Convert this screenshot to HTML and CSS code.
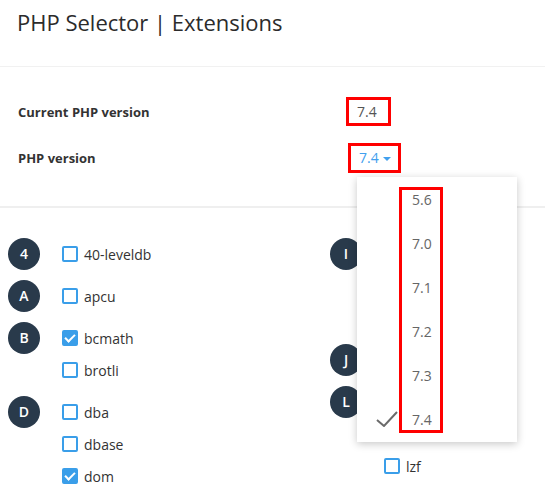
FILE: index.html
```html
<!DOCTYPE html>
<html lang="en">
<head>
  <meta charset="UTF-8">
  <title>PHP Selector | Extensions</title>
  <link rel="stylesheet" href="styles.css">
</head>
<body>
  <!-- Page title -->
  <div class="page-header">
    <h1>PHP Selector | Extensions</h1>
  </div>

  <!-- Version info -->
  <div class="version-info">
    <div class="info-label">Current PHP version</div>
    <div><span class="hl value">7.4</span></div>

    <div class="info-label">PHP version</div>
    <div class="select-wrap">
      <span class="hl trigger">7.4 <span class="caret"></span></span>

      <!-- Open version menu -->
      <ul class="menu">
        <li>5.6</li>
        <li>7.0</li>
        <li>7.1</li>
        <li>7.2</li>
        <li>7.3</li>
        <li class="selected">
          <svg class="tick" width="22" height="16" viewBox="0 0 22 16"><polyline points="1,9 8,15 21,1" fill="none" stroke="#6b6b6b" stroke-width="2"/></svg>
          7.4
        </li>
      </ul>
      <div class="menu-hl"></div>
    </div>
  </div>

  <!-- Extension list -->
  <div class="extensions">
    <div class="column">
      <div class="group">
        <span class="letter">4</span>
        <ul class="items">
          <li><span class="box"></span>40-leveldb</li>
        </ul>
      </div>
      <div class="group">
        <span class="letter">A</span>
        <ul class="items">
          <li><span class="box"></span>apcu</li>
        </ul>
      </div>
      <div class="group">
        <span class="letter">B</span>
        <ul class="items">
          <li><span class="box checked"></span>bcmath</li>
          <li><span class="box"></span>brotli</li>
        </ul>
      </div>
      <div class="group">
        <span class="letter">D</span>
        <ul class="items">
          <li><span class="box"></span>dba</li>
          <li><span class="box"></span>dbase</li>
          <li><span class="box checked"></span>dom</li>
        </ul>
      </div>
    </div>

    <div class="column">
      <div class="group">
        <span class="letter">I</span>
        <ul class="items">
          <li><span class="box"></span>imagick</li>
          <li><span class="box"></span>imap</li>
          <li><span class="box"></span>intl</li>
        </ul>
      </div>
      <div class="group">
        <span class="letter">J</span>
        <ul class="items">
          <li><span class="box"></span>json</li>
        </ul>
      </div>
      <div class="group">
        <span class="letter">L</span>
        <ul class="items">
          <li><span class="box"></span>ldap</li>
          <li><span class="box"></span>libsodium</li>
          <li><span class="box"></span>lzf</li>
        </ul>
      </div>
    </div>
  </div>
</body>
</html>
```

FILE: styles.css
```css
/* Reset */
* {
  margin: 0;
  padding: 0;
  box-sizing: border-box;
}

body {
  font-family: "Open Sans", "DejaVu Sans", sans-serif;
  color: #333;
  background: #fff;
}

ul {
  list-style: none;
}

/* Header */
.page-header {
  padding: 7px 17px 0;
  height: 67px;
  border-bottom: 1px solid #f1f1f1;
}

.page-header h1 {
  font-size: 22px;
  font-weight: 400;
  line-height: 30px;
  color: #2b2b2b;
}

/* Version info */
.version-info {
  display: grid;
  grid-template-columns: 328px auto;
  align-items: center;
  align-content: start;
  row-gap: 17px;
  padding: 30px 18px 0;
  height: 141px;
  border-bottom: 2px solid #efefef;
}

.info-label {
  font-size: 13px;
  font-weight: 700;
  color: #333;
}

.hl {
  display: inline-block;
  vertical-align: top;
  border: 3px solid #f00;
  font-size: 14px;
  line-height: 23px;
}

.value {
  padding: 0 11px 0 8px;
  color: #555;
}

.select-wrap {
  position: relative;
}

.trigger {
  margin-left: 2px;
  padding: 0 7px 0 8px;
  line-height: 24px;
  color: #42a0ee;
}

.caret {
  display: inline-block;
  vertical-align: middle;
  margin-left: 1px;
  border-left: 4px solid transparent;
  border-right: 4px solid transparent;
  border-top: 4px solid #42a0ee;
}

/* Dropdown menu */
.menu {
  position: absolute;
  left: 11px;
  top: 34px;
  width: 160px;
  padding: 0 0 1px;
  background: #fff;
  box-shadow: 0 2px 8px rgba(0, 0, 0, 0.22);
  z-index: 5;
}

.menu li {
  position: relative;
  height: 44px;
  line-height: 46px;
  padding-left: 55px;
  font-size: 14px;
  color: #666;
}

.tick {
  position: absolute;
  left: 19px;
  top: 14px;
}

.menu-hl {
  position: absolute;
  left: 53px;
  top: 44px;
  width: 44px;
  height: 246px;
  border: 3px solid #f00;
  z-index: 6;
}

/* Extensions */
.extensions {
  display: grid;
  grid-template-columns: 322px 1fr;
  padding: 30px 0 0 8px;
}

.group {
  display: flex;
  margin-bottom: 10px;
}

.letter {
  flex: none;
  width: 32px;
  height: 32px;
  border-radius: 50%;
  background: #293a4b;
  color: #fff;
  font-size: 14px;
  font-weight: 600;
  line-height: 32px;
  text-align: center;
}

.items {
  margin-left: 22px;
}

.items li {
  display: flex;
  align-items: center;
  gap: 6px;
  height: 32px;
  font-size: 14px;
  color: #333;
}

.box {
  width: 16px;
  height: 16px;
  border: 2px solid #3a9ee9;
  border-radius: 2px;
  background: #fff;
}

.box.checked {
  position: relative;
  background: #3a9ee9;
}

.box.checked::after {
  content: "";
  position: absolute;
  left: 3px;
  top: 0px;
  width: 4px;
  height: 8px;
  border-right: 2px solid #fff;
  border-bottom: 2px solid #fff;
  transform: rotate(45deg);
}
```
